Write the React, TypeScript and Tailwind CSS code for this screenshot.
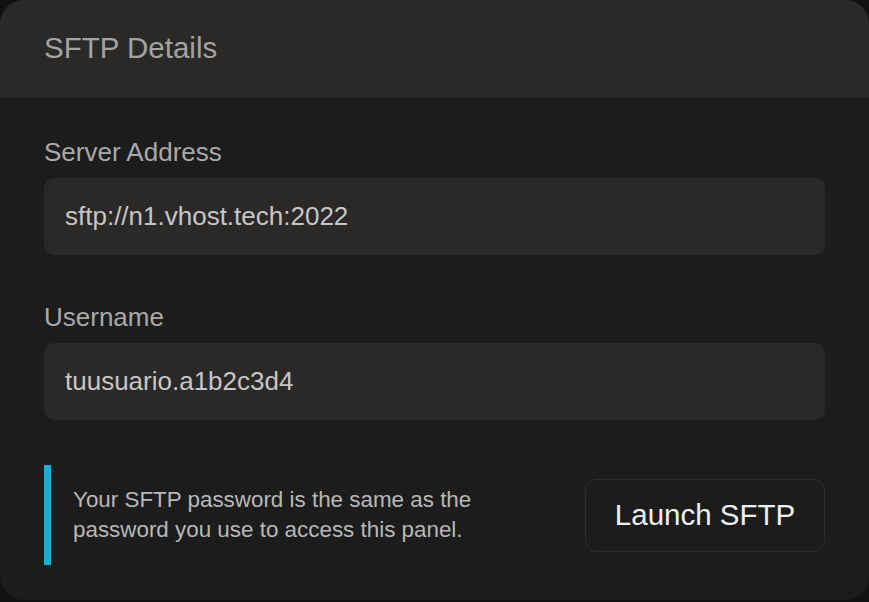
import React from "react";

export default function App() {
  return (
    <div className="w-[869px] h-[602px] bg-[#121212]" style={{ fontFamily: '"Liberation Sans", Arial, sans-serif' }}>
      <div className="w-[869px] h-[600px] rounded-[24px] overflow-hidden bg-[#1c1c1c] flex flex-col">
        <div className="h-[98px] shrink-0 bg-[#2a2928] px-[44px] flex items-center">
          <h2 className="text-[29.5px] leading-[36px] text-[#a3a3a3] -mt-[3px]">SFTP Details</h2>
        </div>
        <div className="flex flex-col px-[44px] pt-[39px]">
          <label className="text-[26px] leading-[30px] text-[#a9a9a9]">Server Address</label>
          <div className="mt-[11px] h-[77px] rounded-[10px] bg-[#2a2928] px-[21px] flex items-center text-[26px] text-[#c6c6c6]">
            sftp://n1.vhost.tech:2022
          </div>
          <label className="mt-[47px] text-[26px] leading-[30px] text-[#a9a9a9]">Username</label>
          <div className="mt-[11px] h-[77px] rounded-[10px] bg-[#2a2928] px-[21px] flex items-center text-[26px] text-[#c6c6c6]">
            tuusuario.a1b2c3d4
          </div>
          <div className="mt-[45px] h-[100px] flex items-center justify-between">
            <div className="flex items-center h-full">
              <div className="w-[7px] h-full bg-[#0fb4d4]" />
              <p className="ml-[22px] max-w-[430px] text-[22.4px] leading-[30px] text-[#b8b8b8]">
                Your SFTP password is the same as the password you use to access this panel.
              </p>
            </div>
            <button className="w-[240px] h-[73px] rounded-[12px] border border-[#2f2f2f] bg-[#1c1c1c] text-[29.5px] text-[#efefef]">
              Launch SFTP
            </button>
          </div>
        </div>
      </div>
    </div>
  );
}
